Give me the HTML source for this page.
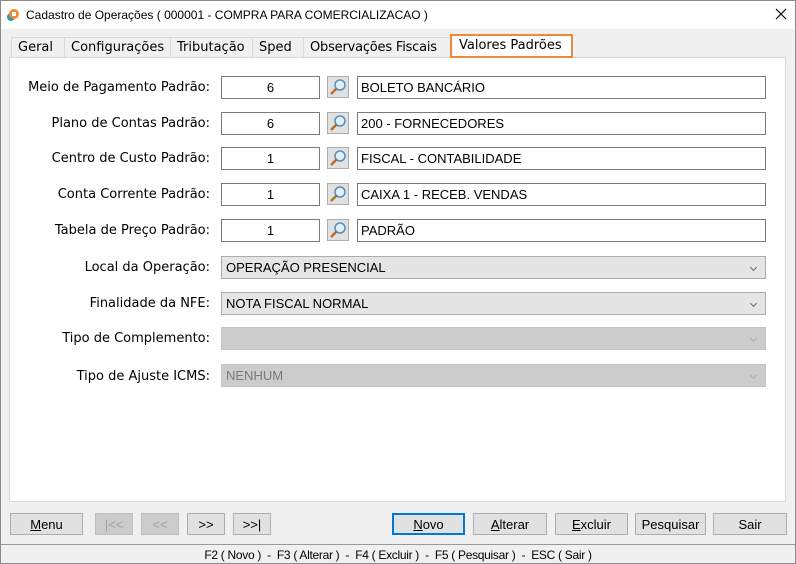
<!DOCTYPE html>
<html><head><meta charset="utf-8"><style>
*{box-sizing:border-box;margin:0;padding:0}
body{width:796px;height:564px;background:#f0f0f0;font-family:"DejaVu Sans",Verdana,sans-serif;font-size:13px;color:#000;position:relative;overflow:hidden}
.abs{position:absolute}
.win{left:0;top:0;width:796px;height:564px;border:1px solid #8a8a8a}
.title{left:1px;top:1px;width:794px;height:28px;background:#fff;font-family:"Liberation Sans",sans-serif;font-size:12px}
.tab{top:37px;height:21px;border:1px solid #d9d9d9;border-bottom:none;background:#f0f0f0;padding:2px 0 0 6px;font-size:13px}
.panel{left:9px;top:57px;width:777px;height:445px;background:#fff;border:1px solid #d9d9d9}
.lbl{text-align:right;width:200px;left:10px;font-size:13px}
.inp{background:#fff;border:1px solid #7a7a7a;height:23px;font-family:"Liberation Sans",sans-serif;font-size:13px;padding:3px 0 0 3px}
.code{left:221px;width:99px;text-align:center;padding-left:0}
.desc{left:357px;width:409px}
.srch{left:327px;width:22px;height:22px;background:#e1e1e1;border:1px solid #adadad}
.cmb{left:221px;width:545px;height:23px;background:#e5e5e5;border:1px solid #acacac;font-family:"Liberation Sans",sans-serif;font-size:13px;padding:3px 0 0 4px}
.cmb.dis{background:#cccccc;border-color:#c4c4c4;color:#7a7a7a}
.arr{position:absolute;right:9px;top:8px;width:5px;height:5px;border-right:1px solid #666;border-bottom:1px solid #666;transform:rotate(45deg)}
.dis .arr{border-color:#aaa}
.btn{top:513px;height:22px;background:#e1e1e1;border:1px solid #adadad;font-family:"Liberation Sans",sans-serif;font-size:13px;text-align:center;padding-top:3px}
.btn.d{color:#a0a0a0;background:#cccccc;border-color:#bfbfbf}
.status{left:1px;top:544px;width:794px;height:19px;border-top:1px solid #999;font-family:"Liberation Sans",sans-serif;font-size:12px;text-align:center;padding-top:3px;letter-spacing:-0.3px}
</style></head><body>
<div class="abs win"></div>
<div class="abs title">
 <svg class="abs" style="left:5px;top:7px" width="14" height="14" viewBox="0 0 14 14"><circle cx="5" cy="9" r="4" fill="#2e9bb0"/><circle cx="8" cy="6" r="5" fill="#f08a2c"/><rect x="6" y="4" width="4" height="4" fill="#fff"/></svg>
 <span class="abs" style="left:25px;top:7px">Cadastro de Operações ( 000001 - COMPRA PARA COMERCIALIZACAO )</span>
 <svg class="abs" style="left:774px;top:7px" width="12" height="12"><path d="M1 1L11 11M11 1L1 11" stroke="#000" stroke-width="1.2"/></svg>
</div>
<div class="abs tab" style="left:11px;width:54px">Geral</div>
<div class="abs tab" style="left:64px;width:107px">Configurações</div>
<div class="abs tab" style="left:170px;width:83px">Tributação</div>
<div class="abs tab" style="left:252px;width:52px">Sped</div>
<div class="abs tab" style="left:303px;width:148px;letter-spacing:-0.2px">Observações Fiscais</div>
<div class="abs panel"></div>
<div class="abs" style="left:450px;top:34px;width:123px;height:24px;background:#fff;border:2px solid #f0883a;padding:2px 0 0 7px;font-size:13px">Valores Padrões</div>

<div class="abs lbl" style="top:80px">Meio de Pagamento Padrão:</div>
<div class="abs lbl" style="top:116px">Plano de Contas Padrão:</div>
<div class="abs lbl" style="top:151px">Centro de Custo Padrão:</div>
<div class="abs lbl" style="top:187px">Conta Corrente Padrão:</div>
<div class="abs lbl" style="top:223px">Tabela de Preço Padrão:</div>
<div class="abs lbl" style="top:260px">Local da Operação:</div>
<div class="abs lbl" style="top:296px">Finalidade da NFE:</div>
<div class="abs lbl" style="top:331px">Tipo de Complemento:</div>
<div class="abs lbl" style="top:369px">Tipo de Ajuste ICMS:</div>

<div class="abs inp code" style="top:76px">6</div><div class="abs srch" style="top:76px"><svg width="20" height="20"><circle cx="12" cy="8" r="5" fill="#dff0fb" stroke="#5a8cb5" stroke-width="1.5"/><path d="M8.5 11.5L3 17" stroke="#b0712a" stroke-width="2.5"/></svg></div><div class="abs inp desc" style="top:76px">BOLETO BANCÁRIO</div>
<div class="abs inp code" style="top:112px">6</div><div class="abs srch" style="top:112px"><svg width="20" height="20"><circle cx="12" cy="8" r="5" fill="#dff0fb" stroke="#5a8cb5" stroke-width="1.5"/><path d="M8.5 11.5L3 17" stroke="#b0712a" stroke-width="2.5"/></svg></div><div class="abs inp desc" style="top:112px">200 - FORNECEDORES</div>
<div class="abs inp code" style="top:147px">1</div><div class="abs srch" style="top:147px"><svg width="20" height="20"><circle cx="12" cy="8" r="5" fill="#dff0fb" stroke="#5a8cb5" stroke-width="1.5"/><path d="M8.5 11.5L3 17" stroke="#b0712a" stroke-width="2.5"/></svg></div><div class="abs inp desc" style="top:147px">FISCAL - CONTABILIDADE</div>
<div class="abs inp code" style="top:183px">1</div><div class="abs srch" style="top:183px"><svg width="20" height="20"><circle cx="12" cy="8" r="5" fill="#dff0fb" stroke="#5a8cb5" stroke-width="1.5"/><path d="M8.5 11.5L3 17" stroke="#b0712a" stroke-width="2.5"/></svg></div><div class="abs inp desc" style="top:183px">CAIXA 1 - RECEB. VENDAS</div>
<div class="abs inp code" style="top:219px">1</div><div class="abs srch" style="top:219px"><svg width="20" height="20"><circle cx="12" cy="8" r="5" fill="#dff0fb" stroke="#5a8cb5" stroke-width="1.5"/><path d="M8.5 11.5L3 17" stroke="#b0712a" stroke-width="2.5"/></svg></div><div class="abs inp desc" style="top:219px">PADRÃO</div>

<div class="abs cmb" style="top:256px">OPERAÇÃO PRESENCIAL<span class="arr"></span></div>
<div class="abs cmb" style="top:292px">NOTA FISCAL NORMAL<span class="arr"></span></div>
<div class="abs cmb dis" style="top:327px"><span class="arr"></span></div>
<div class="abs cmb dis" style="top:364px">NENHUM<span class="arr"></span></div>

<div class="abs btn" style="left:10px;width:73px"><u>M</u>enu</div>
<div class="abs btn d" style="left:95px;width:38px">|&lt;&lt;</div>
<div class="abs btn d" style="left:141px;width:38px">&lt;&lt;</div>
<div class="abs btn" style="left:187px;width:38px">&gt;&gt;</div>
<div class="abs btn" style="left:233px;width:38px">&gt;&gt;|</div>
<div class="abs btn" style="left:392px;width:73px;border:2px solid #0078d7;padding-top:2px"><u>N</u>ovo</div>
<div class="abs btn" style="left:473px;width:74px"><u>A</u>lterar</div>
<div class="abs btn" style="left:555px;width:73px"><u>E</u>xcluir</div>
<div class="abs btn" style="left:635px;width:71px">Pesquisar</div>
<div class="abs btn" style="left:713px;width:74px">Sair</div>

<div class="abs status">F2 ( Novo ) &nbsp;- &nbsp;F3 ( Alterar ) &nbsp;- &nbsp;F4 ( Excluir ) &nbsp;- &nbsp;F5 ( Pesquisar ) &nbsp;- &nbsp;ESC ( Sair )</div>
</body></html>
